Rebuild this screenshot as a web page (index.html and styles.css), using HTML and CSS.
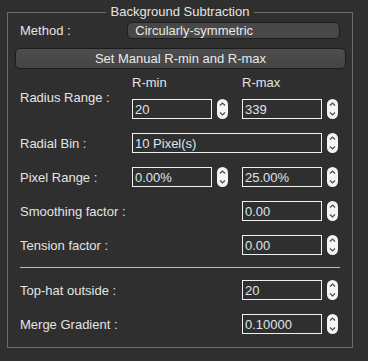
FILE: index.html
```html
<!DOCTYPE html>
<html>
  <head>
    <meta charset="utf-8" />
    <title>Background Subtraction</title>
    <link rel="stylesheet" href="styles.css">
  </head>

  <body>
    <fieldset class="group">
      <legend>Background Subtraction</legend>

      <div class="method">
        <span>Method :</span>
        <div class="combo">Circularly-symmetric</div>
      </div>

      <button class="wide">Set Manual R-min and R-max</button>

      <div class="row row--range">
        <span class="label label--tall">Radius Range :</span>
        <span class="head head--min">R-min</span>
        <span class="head head--max">R-max</span>
        <input class="field field--min" type="text" value="20" />
        <svg class="spin spin--min" viewBox="0 0 11 20"><rect width="11" height="20" rx="5.5" /><polyline points="3,6.5 5.5,4 8,6.5" /><polyline points="3,13.5 5.5,16 8,13.5" /></svg>
        <input class="field field--max" type="text" value="339" />
        <svg class="spin spin--max" viewBox="0 0 11 20"><rect width="11" height="20" rx="5.5" /><polyline points="3,6.5 5.5,4 8,6.5" /><polyline points="3,13.5 5.5,16 8,13.5" /></svg>
      </div>

      <div class="row">
        <span class="label">Radial Bin :</span>
        <input class="field field--span" type="text" value="10 Pixel(s)" />
        <svg class="spin spin--max" viewBox="0 0 11 20"><rect width="11" height="20" rx="5.5" /><polyline points="3,6.5 5.5,4 8,6.5" /><polyline points="3,13.5 5.5,16 8,13.5" /></svg>
      </div>

      <div class="row">
        <span class="label">Pixel Range :</span>
        <input class="field field--min" type="text" value="0.00%" />
        <svg class="spin spin--min" viewBox="0 0 11 20"><rect width="11" height="20" rx="5.5" /><polyline points="3,6.5 5.5,4 8,6.5" /><polyline points="3,13.5 5.5,16 8,13.5" /></svg>
        <input class="field field--max" type="text" value="25.00%" />
        <svg class="spin spin--max" viewBox="0 0 11 20"><rect width="11" height="20" rx="5.5" /><polyline points="3,6.5 5.5,4 8,6.5" /><polyline points="3,13.5 5.5,16 8,13.5" /></svg>
      </div>

      <div class="row">
        <span class="label label--wide">Smoothing factor :</span>
        <input class="field field--max" type="text" value="0.00" />
        <svg class="spin spin--max" viewBox="0 0 11 20"><rect width="11" height="20" rx="5.5" /><polyline points="3,6.5 5.5,4 8,6.5" /><polyline points="3,13.5 5.5,16 8,13.5" /></svg>
      </div>

      <div class="row">
        <span class="label label--wide">Tension factor :</span>
        <input class="field field--max" type="text" value="0.00" />
        <svg class="spin spin--max" viewBox="0 0 11 20"><rect width="11" height="20" rx="5.5" /><polyline points="3,6.5 5.5,4 8,6.5" /><polyline points="3,13.5 5.5,16 8,13.5" /></svg>
      </div>

      <hr class="sep" />

      <div class="row row--after">
        <span class="label label--wide">Top-hat outside :</span>
        <input class="field field--max" type="text" value="20" />
        <svg class="spin spin--max" viewBox="0 0 11 20"><rect width="11" height="20" rx="5.5" /><polyline points="3,6.5 5.5,4 8,6.5" /><polyline points="3,13.5 5.5,16 8,13.5" /></svg>
      </div>

      <div class="row">
        <span class="label label--wide">Merge Gradient :</span>
        <input class="field field--max" type="text" value="0.10000" />
        <svg class="spin spin--max" viewBox="0 0 11 20"><rect width="11" height="20" rx="5.5" /><polyline points="3,6.5 5.5,4 8,6.5" /><polyline points="3,13.5 5.5,16 8,13.5" /></svg>
      </div>
    </fieldset>
  </body>
</html>
```

FILE: styles.css
```css
:root {
  font-family: 'Liberation Sans', Arial, sans-serif;
  font-size: 13px;
}

body {
  margin: 0;
  width: 368px;
  height: 361px;
  background: #2f2f2f;
  color: #e4e4e4;
  overflow: hidden;
}

.group {
  box-sizing: border-box;
  width: 346px;
  height: 344px;
  margin: 4px 0 0 7px;
  padding: 0 12px;
  min-inline-size: 0;
  border: 1px solid #6c6c6c;
}

.group legend {
  margin: 0 auto;
  padding: 0 5px;
  line-height: 16px;
  color: #e4e4e4;
}

.method {
  display: flex;
  align-items: center;
  height: 17px;
  margin-top: 2px;
  line-height: 15px;
}

.method span {
  width: 108px;
}

.combo {
  box-sizing: border-box;
  width: 214px;
  height: 17px;
  padding-left: 7px;
  line-height: 15px;
  background: #484848;
  border: 1px solid #1f1f1f;
  border-radius: 5px;
  color: #e8e8e8;
}

.wide {
  display: block;
  box-sizing: border-box;
  width: 331px;
  height: 21px;
  margin: 9px 0 0 -5px;
  padding: 0;
  font: inherit;
  line-height: 19px;
  color: #e8e8e8;
  background: linear-gradient(#4d4d4d, #454545);
  border: 1px solid #1c1c1c;
  border-radius: 5px;
}

/* label | field | spinner | field | spinner */
.row {
  display: grid;
  grid-template-columns: 112px 80px 30px 80px 16px;
  grid-template-rows: 20px;
  align-items: center;
  margin-top: 14px;
  line-height: 15px;
}

.row--range {
  grid-template-rows: 15px 20px;
  row-gap: 9px;
  margin-top: 6px;
}

.row--after {
  margin-top: 12px;
}

.label {
  grid-column: 1;
}

.label--tall {
  grid-row: 1 / 3;
}

.label--wide {
  grid-column: 1 / 4;
}

.head {
  grid-row: 1;
  color: #e4e4e4;
}

.head--min {
  grid-column: 2;
  padding-left: 0;
}

.head--max {
  grid-column: 4;
}

.field {
  box-sizing: border-box;
  height: 20px;
  width: 100%;
  margin: 0;
  padding: 0 2px;
  font: inherit;
  color: #dfe5ec;
  background: #2f2f2f;
  border: 1px solid #f0f0f0;
  border-radius: 0;
  outline: none;
}

.field--min {
  grid-column: 2;
}

.field--max {
  grid-column: 4;
}

.field--span {
  grid-column: 2 / 5;
}

.row--range .field,
.row--range .spin {
  grid-row: 2;
}

.spin {
  width: 11px;
  height: 20px;
  margin-left: 5px;
}

.spin--min {
  grid-column: 3;
}

.spin--max {
  grid-column: 5;
}

.spin rect {
  fill: #f4f4f4;
}

.spin polyline {
  fill: none;
  stroke: #4a4a4a;
  stroke-width: 1.2;
}

.sep {
  width: 320px;
  height: 0;
  margin: 12px 0 0 0;
  border: 0;
  border-top: 1px solid #bdbdbd;
}
```
